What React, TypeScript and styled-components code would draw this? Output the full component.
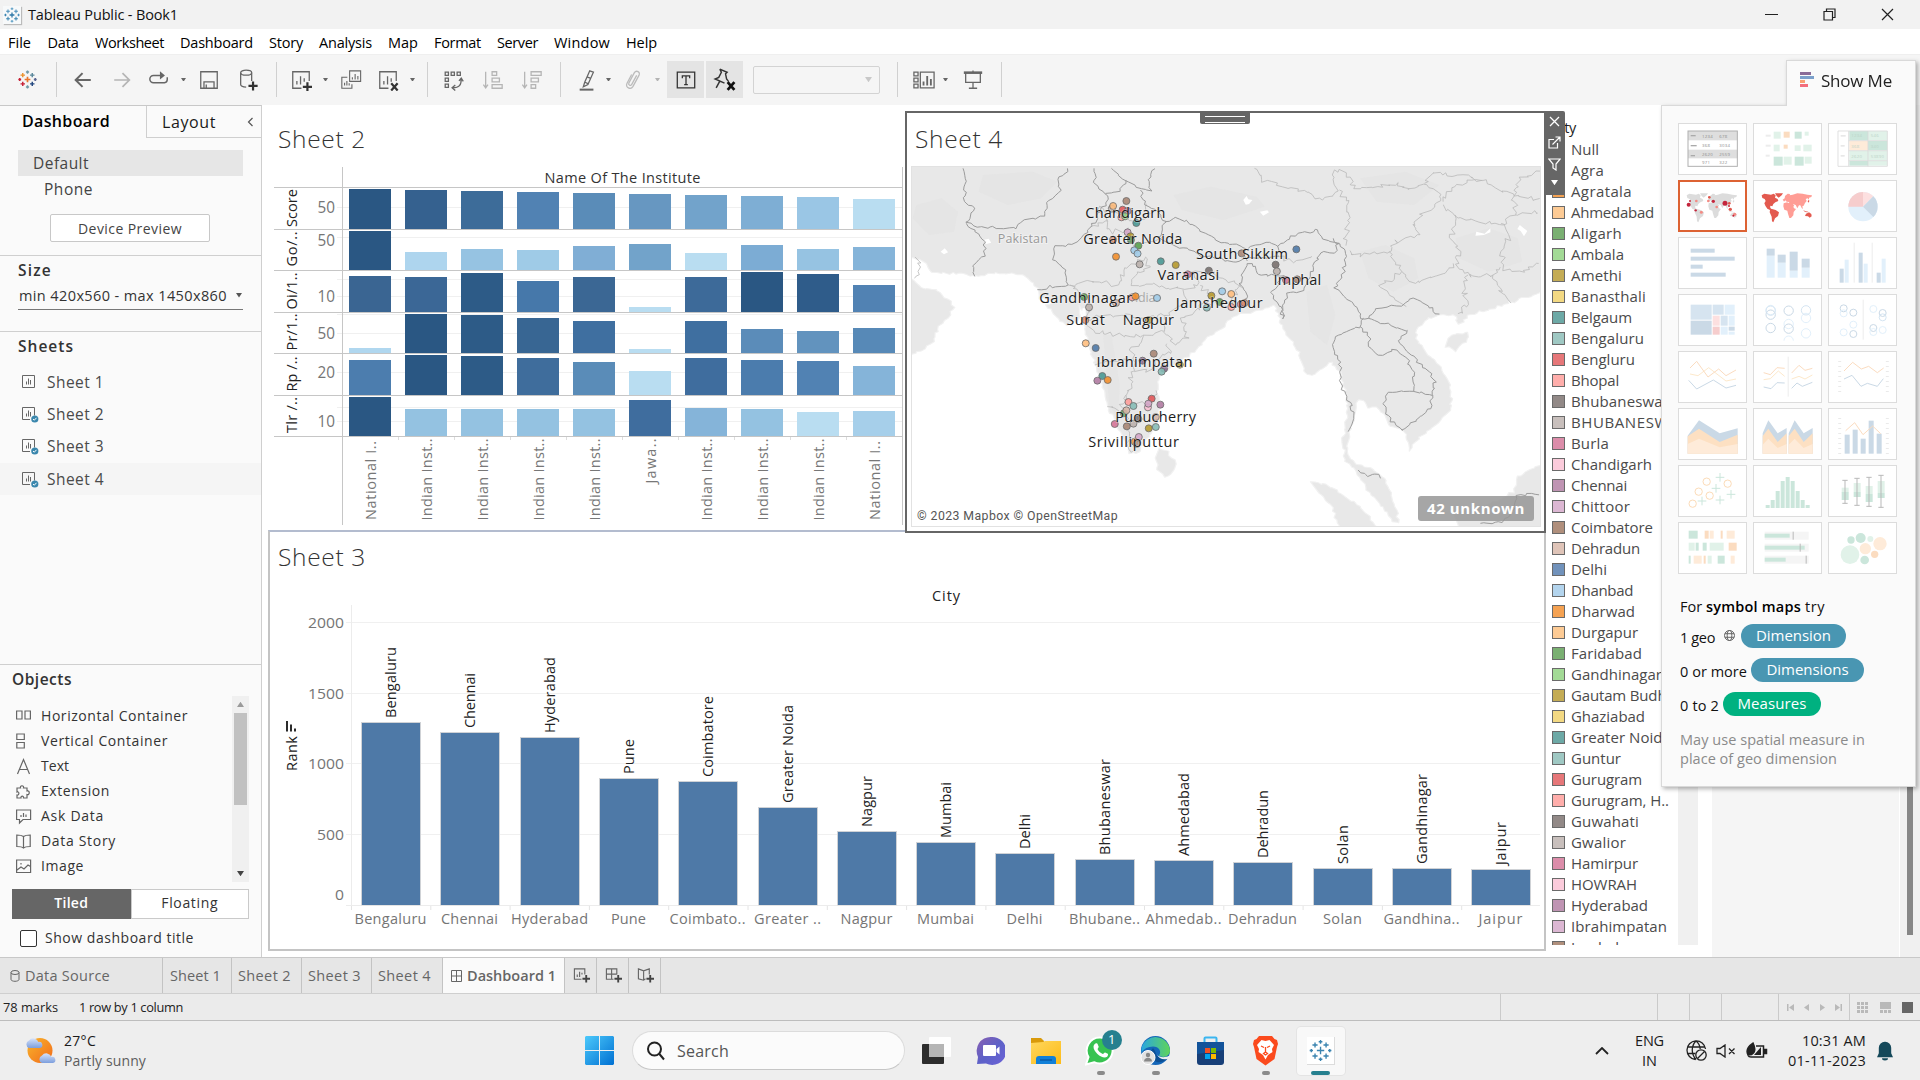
import React, { useLayoutEffect, useRef, useState } from "react";
import styled, { createGlobalStyle, css } from "styled-components";

const FONT = "'Open Sans', 'Noto Sans', sans-serif";

const Global = createGlobalStyle`
  * { box-sizing: border-box; }
  body { margin: 0; background: #fff; overflow: hidden; }
  svg { display: block; flex: none; }
  text { font-family: ${FONT}; }
`;

/* ---------- text that keeps a fixed advance width ---------- */

const FitSpan = styled.span`
  white-space: pre;
  display: inline-block;
`;

function Fit({ w, children }: { w: number; children: string }) {
  const ref = useRef<HTMLSpanElement>(null);
  const [ls, setLs] = useState(0);
  useLayoutEffect(() => {
    const el = ref.current;
    if (!el) return;
    setLs((w - el.getBoundingClientRect().width) / children.length);
  }, [w, children]);
  return (
    <FitSpan ref={ref} style={{ letterSpacing: ls }}>
      {children}
    </FitSpan>
  );
}

/* ---------- window frame ---------- */

const Window = styled.div`
  width: 1920px;
  height: 1080px;
  display: flex;
  flex-direction: column;
  font-family: ${FONT};
  font-size: 15px;
  color: #333;
  position: relative;
  overflow: hidden;
`;

const TitleBar = styled.header`
  height: 29px;
  background: #f2f2f2;
  display: flex;
  align-items: center;
  padding-left: 3px;
  color: #111;
  font-size: 14.5px;
`;

const AppBadge = styled.div`
  width: 18px;
  height: 18px;
  background: #f7f9fa;
  box-shadow: 1px 1px 1px #bbb;
  margin-right: 7px;
  display: grid;
  place-items: center;
`;

const Controls = styled.div`
  margin-left: auto;
  display: flex;
  align-items: center;
  gap: 45px;
  padding-right: 26px;
`;

const MenuBar = styled.nav`
  height: 25px;
  background: #fff;
  display: flex;
  align-items: center;
  padding-left: 8px;
  font-size: 14.5px;
  color: #000;
`;

const MenuItem = styled.div<{ $w: number }>`
  width: ${(p) => p.$w}px;
  line-height: 20px;
  padding-top: 2px;
`;

const Toolbar = styled.div`
  height: 51px;
  background: #f5f5f5;
  border-top: 1px solid #efefef;
  display: flex;
  align-items: center;
  padding: 0 0 1px 15px;
`;

const Sep = styled.i<{ $ml: number }>`
  width: 1px;
  height: 35px;
  background: #d0d0d0;
  margin-left: ${(p) => p.$ml}px;
`;

const Tool = styled.div<{ $ml: number; $w?: number; $on?: boolean; $dim?: boolean }>`
  width: ${(p) => p.$w ?? 24}px;
  height: 37px;
  margin-left: ${(p) => p.$ml}px;
  display: grid;
  place-items: center;
  background: ${(p) => (p.$on ? "#e4e4e4" : "transparent")};
  opacity: ${(p) => (p.$dim ? 0.45 : 1)};
`;

const Combo = styled.div`
  width: 127px;
  height: 28px;
  margin-left: 10px;
  border: 1px solid #d3d3d3;
  border-radius: 2px;
  display: flex;
  align-items: center;
  justify-content: flex-end;
  padding-right: 7px;
`;

const Main = styled.main`
  height: 852px;
  display: flex;
`;

/* ---------- icons ---------- */

const Caret = ({ s = 5, c = "#666" }: { s?: number; c?: string }) => (
  <svg width={s} height={s * 0.75} viewBox="0 0 8 6">
    <path d="M0 0h8L4 6z" fill={c} />
  </svg>
);

const plus = (x: number, y: number, r: number) => `M${x - r} ${y}h${2 * r}M${x} ${y - r}v${2 * r}`;

function TableauMark({ size, colors, sw = 1.3 }: { size: number; colors: string[]; sw?: number }) {
  const c = (i: number) => colors[i % colors.length];
  return (
    <svg width={size} height={size} viewBox="0 0 24 24" fill="none" strokeWidth={sw}>
      <path d={plus(12, 12, 3.6)} stroke={c(0)} strokeWidth={sw * 1.2} />
      <path d={plus(6, 6.5, 2.8)} stroke={c(1)} />
      <path d={plus(18, 6.5, 2.8)} stroke={c(2)} />
      <path d={plus(6, 17.5, 2.8)} stroke={c(3)} />
      <path d={plus(18, 17.5, 2.8)} stroke={c(4)} />
      <path d={plus(12, 2.6, 2)} stroke={c(5)} />
      <path d={plus(12, 21.4, 2)} stroke={c(5)} />
      <path d={plus(2.2, 12, 1.8)} stroke={c(3)} />
      <path d={plus(21.8, 12, 1.8)} stroke={c(6)} />
    </svg>
  );
}

const BLUES = ["#2f78a8", "#4b8fba", "#4b8fba", "#3a84b0", "#3a84b0", "#5a9cc4", "#4b8fba"];
const MULTI = ["#e8762d", "#eb912c", "#59879b", "#c72035", "#1f457e", "#7199a6", "#5b6591"];

const Ico = ({ children, s = 22, c = "#666", w = 1.4 }: any) => (
  <svg width={s} height={s} viewBox="0 0 24 24" fill="none" stroke={c} strokeWidth={w}>
    {children}
  </svg>
);

const Icons = {
  back: <Ico w={2.2}><path d="M20.500 12H4M11.500 4.500 4 12l7.500 7.500" /></Ico>,
  fwd: <Ico w={1.9} c="#b5b5b5"><path d="M3.500 12H20M12.500 4.500 20 12l-7.500 7.500" /></Ico>,
  redo: <Ico w={1.6}><path d="M14 7H6a4 4 0 0 0 0 8h12a3.500 3.500 0 0 0 3-3.500V9" /><path d="M13 2.500l5.500 4.500-5.500 4.500z" fill="#666" stroke="none" /></Ico>,
  save: <Ico><path d="M3 3h18v18H3zM6.500 21v-7h11v7M9 21v-4" /></Ico>,
  db: <Ico><ellipse cx="10" cy="4" rx="6" ry="2.700" /><path d="M4 4v13c0 1.500 2.500 2.700 6 2.700M16 4v9" /><path d="M12.500 18.500h10M17.500 13.500v10" stroke="#333" strokeWidth="2.400" /></Ico>,
  sheet: <Ico><path d="M12.500 21H3V3h18v10M7.500 17v-4M11.500 17V8M15.500 14v-4" /><path d="M14 19.500h10M19 14.500v10" stroke="#333" strokeWidth="2.400" /></Ico>,
  dup: <Ico w={1.200}><path d="M10.500 2h12v11.500h-12zM13.500 11.500V9M16.500 11.500V5.500M19.500 11.500V7.500M8 9H2v12h11v-4.500M5 18v-3M7.500 18v-5M10 18v-2.500" /></Ico>,
  clear: <Ico><path d="M12.500 21H3V3h18v10M7.500 17v-4M11.500 17V8M15.500 14v-4" /><path d="M15.500 15.500l7 8M22.500 15.500l-7 8" stroke="#333" strokeWidth="2.400" /></Ico>,
  swap: <Ico><path d="M3.500 3.500h3.500v3.500h-3.500zM10 3.500h3.500v3.500H10zM16.500 3.500H20v3.500h-3.500zM3.500 10h3.500v3.500h-3.500zM3.500 16.500h3.500V20h-3.500zM21 10.500c0 7-2 10-9.500 10M18.500 13l2.500-3 2.200 3.500M14.500 17.500l-3.500 3 3.500 3" /></Ico>,
  asc: <Ico c="#b5b5b5"><path d="M4 3v17M1.500 17 4 20.500 6.500 17M11 3h5v4h-5zM11 10h8v4h-8zM11 17h11v4H11z" /></Ico>,
  desc: <Ico c="#b5b5b5"><path d="M4 3v17M1.500 17 4 20.500 6.500 17M11 3h11v4H11zM11 10h8v4h-8zM11 17h5v4h-5z" /></Ico>,
  pen: <Ico><path d="M4 22.500h15" strokeWidth="2.200" /><path d="M15 2l4 1.500-6 13.500-5 2.500 1.500-5zM9.800 14.500l3.200 1.500M12 8.500l3.500 1.500" /></Ico>,
  clip: <Ico c="#777"><path d="M16 7l-5.500 10c-1 2-4 .5-3-1.700l6-11.300c2-3 7-1 5 3l-6.500 12c-2.300 4-9 1.500-6.500-3.500l5-9.500" /></Ico>,
  text: <Ico c="#333"><path d="M2.500 3.500h19v17h-19zM8 10V7.500h8V10M12 7.500v9.500M10 17h4" /></Ico>,
  pin: <Ico c="#333" s={25}><path d="M7.500 2l7 3-1.500 1.500 1 5 2 2.500M7.500 2l1.500 3-2.500 5-3.500 1.500 9 4M7.500 13.500 4 20" /><path d="M15 14.500l6.500 7.500M21.500 14.500 15 22" stroke="#111" strokeWidth="2.600" /></Ico>,
  cards: <Ico><path d="M1 3.500h4.500v4H1zM1 10h4.500v4H1zM1 16.500h4.500v4H1zM8 3.500h15v17H8z" /><path d="M11.500 18v-4.500M15.500 18V7.500M19.500 18v-7" strokeWidth="2" /></Ico>,
  present: <Ico><path d="M2 4h20" strokeWidth="2.800" /><path d="M4 4v10.500h16V4M12 14.500v6.500M7.500 21h9M12 4V1.500" /></Ico>,
};

/* ---------- side panel ---------- */

const Side = styled.aside`
  width: 262px;
  background: #fafafa;
  border-right: 1px solid #cfcfcf;
  border-top: 1px solid #c8c8c8;
  display: flex;
  flex-direction: column;
`;

const SideTabs = styled.div`
  display: flex;
  height: 32px;
  font-size: 16px;
`;

const SideTab = styled.div<{ $active?: boolean }>`
  line-height: 31px;
  color: #1a1a1a;
  ${(p) =>
    p.$active
      ? css`
          width: 146px;
          padding-left: 22px;
          font-weight: 600;
          color: #000;
        `
      : css`
          flex: 1;
          padding: 1px 7px 0 15px;
          line-height: 33px;
          border-left: 1px solid #cfcfcf;
          border-bottom: 1px solid #cfcfcf;
          display: flex;
          justify-content: space-between;
          align-items: center;
        `}
`;

const Devices = styled.div`
  padding: 12px 18px 0;
  height: 117px;
  color: #444;
  font-size: 15.5px;
`;

const Device = styled.div<{ $sel?: boolean }>`
  height: 26px;
  line-height: 26px;
  background: ${(p) => (p.$sel ? "#e6e6e6" : "transparent")};
  padding-left: ${(p) => (p.$sel ? 15 : 26)}px;
`;

const PreviewButton = styled.button`
  display: block;
  width: 160px;
  height: 28px;
  margin: 12px 0 0 32px;
  padding: 0;
  border: 1px solid #c8c8c8;
  border-radius: 2px;
  background: #fff;
  font: 14px ${FONT};
  color: #444;
`;

const Section = styled.section<{ $h: number; $px: number }>`
  height: ${(p) => p.$h}px;
  border-top: 1px solid #cfcfcf;
  padding: 3px ${(p) => p.$px}px 0;
`;

const Heading = styled.h2<{ $mb?: number }>`
  margin: 0 0 ${(p) => p.$mb ?? 0}px;
  font-size: 15.5px;
  line-height: 23px;
  font-weight: 600;
  color: #333;
`;

const SizePicker = styled.div`
  margin-top: 2px;
  height: 26px;
  border-bottom: 1px solid #777;
  display: flex;
  align-items: center;
  justify-content: space-between;
  padding: 0 1px 2px;
  font-size: 14.5px;
`;

const SheetItem = styled.div<{ $on?: boolean }>`
  height: 32.2px;
  margin: 0 -18px;
  padding-left: 22px;
  display: flex;
  align-items: center;
  gap: 8px;
  background: ${(p) => (p.$on ? "#f5f5f5" : "transparent")};
  color: #4a4a4a;
  font-size: 15.5px;
`;

const ObjectList = styled.div`
  display: flex;
  justify-content: space-between;
  height: 186px;
  margin-top: 5px;
`;

const ObjectItems = styled.div`
  padding: 7px 0 0 4px;
`;

const ObjectItem = styled.div`
  height: 25.05px;
  display: flex;
  align-items: center;
  gap: 9px;
  font-size: 14px;
  color: #333;
`;

const Scroll = styled.div`
  width: 17px;
  background: #f0f0f0;
  display: flex;
  flex-direction: column;
  align-items: center;
`;

const ScrollArrow = styled.div<{ $up?: boolean }>`
  height: 17px;
  display: grid;
  place-items: center;
  transform: ${(p) => (p.$up ? "rotate(180deg)" : "none")};
`;

const ScrollThumb = styled.div`
  width: 13px;
  height: 92px;
  background: #c1c1c1;
  margin-bottom: auto;
`;

const Segmented = styled.div`
  display: flex;
  margin-top: 7px;
  height: 30px;
`;

const Segment = styled.div<{ $on?: boolean }>`
  flex: 1;
  text-align: center;
  line-height: 26px;
  font-size: 14px;
  font-weight: ${(p) => (p.$on ? 600 : 400)};
  color: ${(p) => (p.$on ? "#fff" : "#333")};
  background: ${(p) => (p.$on ? "#666" : "#fff")};
  border: 1px solid ${(p) => (p.$on ? "#666" : "#cacaca")};
`;

const CheckRow = styled.div`
  display: flex;
  align-items: center;
  gap: 8px;
  margin: 9px 0 0 8px;
  font-size: 14px;
  line-height: 20px;
`;

const CheckBox = styled.i`
  width: 17px;
  height: 17px;
  border: 1px solid #333;
  border-radius: 2px;
  background: #fff;
`;

const SheetIcon = ({ used }: { used?: boolean }) => (
  <svg width="17" height="18" viewBox="0 0 17 18" fill="none" stroke="#666" strokeWidth="1">
    <path d={used ? "M8 14.500H.500v-12h12v8" : "M.500 2.500h12v12H.500z"} />
    <path d="M4.500 11.500V8.500M6.500 11.500V5.500M8.500 11.500V7" />
    {used && <circle cx="12.800" cy="14" r="3.600" fill="#3a87ad" stroke="none" />}
    {used && <path d="M11 14l1.300 1.200 2.200-2.400" stroke="#fff" />}
  </svg>
);

const objIcon = (d: string) => (
  <svg width="16" height="18" viewBox="0 0 16 18" fill="none" stroke="#666" strokeWidth="1.200">
    <path d={d} />
  </svg>
);

const OBJECTS: [string, number, string][] = [
  ["Horizontal Container", 147, "M.6 4h5.400v8H.600zM9 4h5.400v8H9z"],
  ["Vertical Container", 127, "M.800 2h7.500v5.500H.800zM.800 10.500h7.500V16H.800z"],
  ["Text", 28, "M1.500 17 7.500 2.500l6 14.500M3.500 12.500h8"],
  ["Extension", 69, "M1 6h3.500c-1-3 4-3 3 0H11v3c3-1 3 4.500 0 3.500V16H7.500c.5-2.500-3-2.500-2.500 0H1v-3c2.500.5 2.500-4 0-3z"],
  ["Ask Data", 63, "M.600 3h14v9.500H7L3.500 16v-3.500H.600zM5 10V8M7.500 10V6M10 10V7.500"],
  ["Data Story", 75, "M7.500 4.500C5.500 3 3 3 .800 3v11.500c2 0 5 0 6.700 1.500 1.700-1.500 4.500-1.500 6.700-1.500V3c-2.200 0-4.700 0-6.700 1.500zv11"],
  ["Image", 43, "M.600 3h14v12.500H.600zM1 13l4-3 3 2 4-4 2.500 1.500M5 6v1.500"],
];

function SidePanel() {
  return (
    <Side>
      <SideTabs>
        <SideTab $active><Fit w={88}>Dashboard</Fit></SideTab>
        <SideTab>
          <Fit w={54}>Layout</Fit>
          <svg width="7" height="10" viewBox="0 0 7 10" fill="none" stroke="#555" strokeWidth="1.200"><path d="M5.500 1 1.500 5l4 4" /></svg>
        </SideTab>
      </SideTabs>
      <Devices>
        <Device $sel><Fit w={56}>Default</Fit></Device>
        <Device><Fit w={49}>Phone</Fit></Device>
        <PreviewButton><Fit w={104}>Device Preview</Fit></PreviewButton>
      </Devices>
      <Section $h={76} $px={18}>
        <Heading><Fit w={34}>Size</Fit></Heading>
        <SizePicker>
          <Fit w={208}>min 420x560 - max 1450x860</Fit>
          <Caret s={6} c="#555" />
        </SizePicker>
      </Section>
      <Section $h={333} $px={18}>
        <Heading $mb={8}><Fit w={56}>Sheets</Fit></Heading>
        {[1, 2, 3, 4].map((n) => (
          <SheetItem key={n} $on={n === 4}>
            <SheetIcon used={n > 1} />
            <Fit w={57}>{"Sheet " + n}</Fit>
          </SheetItem>
        ))}
      </Section>
      <Section $h={293} $px={12}>
        <Heading><Fit w={60}>Objects</Fit></Heading>
        <ObjectList>
          <ObjectItems>
            {OBJECTS.map(([label, w, d]) => (
              <ObjectItem key={label}>
                {objIcon(d)}
                <Fit w={w}>{label}</Fit>
              </ObjectItem>
            ))}
          </ObjectItems>
          <Scroll>
            <ScrollArrow $up><Caret s={7} c="#9a9a9a" /></ScrollArrow>
            <ScrollThumb />
            <ScrollArrow><Caret s={7} c="#444" /></ScrollArrow>
          </Scroll>
        </ObjectList>
        <Segmented>
          <Segment $on><Fit w={34}>Tiled</Fit></Segment>
          <Segment><Fit w={57}>Floating</Fit></Segment>
        </Segmented>
        <CheckRow>
          <CheckBox />
          <Fit w={149}>Show dashboard title</Fit>
        </CheckRow>
      </Section>
    </Side>
  );
}

/* ---------- sheet 2: small multiples ---------- */

const INSTITUTES = ["National I..", "Indian Inst..", "Indian Inst..", "Indian Inst..", "Indian Inst..", "Jawa..", "Indian Inst..", "Indian Inst..", "Indian Inst..", "National I.."];

interface Measure {
  name: string;
  len: number;
  bottom: number;
  tick: string;
  tickY: number;
  grid: number[];
  h: number[];
  c: string[];
}

const MEASURES: Measure[] = [
  { name: "Score", len: 38, bottom: 229, tick: "50", tickY: 207.5, grid: [207.5], h: [40, 39, 38, 37, 36, 35, 34, 33, 32, 30], c: ["#2a5783", "#35618f", "#3d6c99", "#5182b3", "#5a8cb8", "#6797c1", "#72a3cb", "#7eaed4", "#9ac6e5", "#b9ddf1"] },
  { name: "Go/..", len: 35, bottom: 270, tick: "50", tickY: 240.5, grid: [237.5], h: [39, 18, 21, 20, 24, 26, 17, 25, 21, 23], c: ["#2a5783", "#aed5ee", "#96c3e2", "#9fcbe7", "#80aed5", "#72a3ca", "#b9ddf1", "#7cacd4", "#96c3e2", "#85b4d9"] },
  { name: "Oi/1..", len: 37, bottom: 312, tick: "10", tickY: 296.5, grid: [279.5, 296.5], h: [36, 35, 39, 31, 35, 5, 35, 40, 38, 27], c: ["#3a6592", "#3b6796", "#2d5b87", "#4678aa", "#3b6794", "#b9ddf1", "#3d6a99", "#2a5783", "#2f5c8a", "#5182b3"] },
  { name: "Pr/1..", len: 37, bottom: 353, tick: "50", tickY: 333.5, grid: [314.5, 333.5], h: [5, 39, 38, 35, 32, 4, 32, 24, 22, 25], c: ["#b0d7ef", "#2a5783", "#2d5b87", "#386693", "#3f6fa0", "#b9ddf1", "#3f6fa0", "#5b8cb9", "#6293be", "#5789b7"] },
  { name: "Rp /..", len: 35, bottom: 395, tick: "20", tickY: 372.5, grid: [372.5], h: [35, 40, 39, 37, 33, 24, 37, 35, 34, 29], c: ["#4c7dae", "#2a5783", "#2d5b87", "#3f6d9c", "#5a8cb8", "#b9ddf1", "#3f6d9e", "#4b7cad", "#5182b3", "#85b4d9"] },
  { name: "Tlr /..", len: 36, bottom: 436, tick: "10", tickY: 421.5, grid: [407.5, 421.5], h: [39, 27, 27, 27, 27, 36, 28, 27, 24, 25], c: ["#2a5783", "#94c2e1", "#94c2e1", "#94c2e1", "#94c2e1", "#3f6d9e", "#85b4d9", "#94c2e1", "#b9ddf1", "#a6cfea"] },
];

const SheetTitle = styled.h1<{ $h: number; $pl: number; $pt: number }>`
  margin: 0;
  height: ${(p) => p.$h}px;
  padding: ${(p) => p.$pt}px 0 0 ${(p) => p.$pl}px;
  font-size: 24.5px;
  line-height: 32px;
  font-weight: 300;
  color: #333;
`;

const Sheet2Card = styled.section`
  width: 637px;
  height: 425px;
`;

function Sheet2() {
  return (
    <Sheet2Card>
      <SheetTitle $h={62} $pl={10} $pt={18}><Fit w={88}>Sheet 2</Fit></SheetTitle>
      <svg width="637" height="363" viewBox="268 167 637 363">
        <text x="622.500" y="182.500" fontSize="14.500" textAnchor="middle" textLength="156" fill="#333">Name Of The Institute</text>
        {MEASURES.map((m) => (
          <g key={m.name}>
            {m.grid.map((y) => <path key={y} d={`M337 ${y}H902`} stroke="#f0f0f0" />)}
            <text x="335" y={m.tickY + 5.500} fontSize="15.500" textAnchor="end" textLength="17.500" lengthAdjust="spacingAndGlyphs" fill="#757575">{m.tick}</text>
            <text transform={`translate(297 ${m.bottom - 21}) rotate(-90)`} fontSize="14.500" textAnchor="middle" textLength={m.len} fill="#222">{m.name}</text>
            {m.h.map((h, i) => <rect key={i} x={349 + i * 56} y={m.bottom - h} width="42" height={h} fill={m.c[i]} shapeRendering="crispEdges" />)}
            <path d={`M274 ${m.bottom + 0.500}H902`} stroke="#c6c6c6" />
          </g>
        ))}
        <path d="M274 187.500H902M342.500 167V525M902.500 167V525" stroke="#c6c6c6" />
        {INSTITUTES.map((t, i) => (
          <g key={i}>
            {i > 0 && <path d={`M${342.500 + i * 56} 437v3`} stroke="#ddd" />}
            <text transform={`translate(${375.500 + i * 56} ${t.startsWith("N") ? 441 : 438.500}) rotate(-90)`} fontSize="14.500" textAnchor="end" textLength={t.startsWith("Ind") ? 82 : t.startsWith("J") ? 45 : 79} fill="#777">{t}</text>
          </g>
        ))}
      </svg>
    </Sheet2Card>
  );
}

/* ---------- sheet 4: symbol map ---------- */

const Sheet4Card = styled.section`
  position: relative;
  z-index: 1;
  width: 641px;
  height: 422px;
  margin-top: 6px;
  border: 2px solid #666;
  background: #fff;
`;

const MapFrame = styled.div`
  position: relative;
  margin-left: 4px;
  width: 630px;
  height: 361px;
  border: 1px solid #e2e2e2;
`;

const Attribution = styled.div`
  position: absolute;
  left: 2px;
  bottom: 1px;
  padding: 0 4px 0 3px;
  height: 17px;
  font: 12.3px/17px Roboto, sans-serif;
  color: #555;
  background: rgba(255, 255, 255, 0.7);
`;

const Unknown = styled.div`
  position: absolute;
  right: 6px;
  bottom: 5px;
  width: 116px;
  height: 25px;
  border-radius: 3px;
  background: rgba(150, 150, 150, 0.85);
  color: #fff;
  font-weight: 700;
  font-size: 15px;
  line-height: 24px;
  text-align: center;
`;

const Grip = styled.div`
  position: absolute;
  left: 293px;
  top: -1px;
  width: 50px;
  height: 12px;
  background: #666;
  border-radius: 0 0 2px 2px;
  padding: 4px 5px;
  &::before {
    content: "";
    display: block;
    height: 5px;
    border-top: 1px solid #fff;
    border-bottom: 1px solid #fff;
  }
`;

const CardTools = styled.div`
  position: absolute;
  left: 637px;
  top: -2px;
  width: 21px;
  height: 84px;
  background: #666;
  border-radius: 0 2px 0 0;
  display: flex;
  flex-direction: column;
  align-items: center;
  padding: 5px 1px 0 0;
  gap: 9px;
`;

type P = [number, number];

/* Subdivides a polyline with a deterministic jitter so borders look surveyed. */
function rough(points: P[], amp: number, closed = false): string {
  let seed = 7 + points.length * 31 + points[0][0];
  const rnd = () => {
    seed = (seed * 9301 + 49297) % 233280;
    return seed / 233280 - 0.5;
  };
  const out: P[] = [points[0]];
  for (let i = 1; i < points.length; i++) {
    const [ax, ay] = points[i - 1];
    const [bx, by] = points[i];
    const n = Math.max(1, Math.round(Math.hypot(bx - ax, by - ay) / 9));
    for (let k = 1; k <= n; k++) {
      const t = k / n;
      out.push([ax + (bx - ax) * t + rnd() * amp, ay + (by - ay) * t + rnd() * amp]);
    }
  }
  return "M" + out.map(([x, y]) => `${x.toFixed(1)} ${y.toFixed(1)}`).join("L") + (closed ? "Z" : "");
}

const pts = (s: string): P[] => s.split(" ").map((q) => q.split(",").map(Number) as P);

const LAND = [
  "20,180 1550,180 1550,555 1520,572 1480,590 1440,605 1400,620 1370,632 1357,655 1345,655 1340,632 1300,632 1270,645 1250,665 1245,700 1265,740 1300,780 1325,830 1332,880 1325,920 1290,960 1260,990 1228,1035 1224,1005 1215,978 1185,965 1165,930 1150,905 1125,910 1115,885 1100,890 1098,940 1085,980 1080,1020 1085,1060 1105,1080 1140,1090 1170,1120 1185,1170 1205,1250 1190,1250 1160,1200 1130,1165 1115,1130 1100,1100 1075,1070 1068,1010 1075,960 1080,920 1075,860 1060,800 1040,770 1020,790 1000,810 975,805 968,760 950,720 930,680 915,640 905,600 880,610 850,620 800,635 775,670 740,695 710,740 680,765 650,790 625,815 620,850 625,900 620,960 605,990 585,1020 570,1048 555,1045 540,1000 520,955 500,900 490,850 478,800 462,750 450,700 445,655 442,620 435,605 430,650 400,660 370,630 352,600 372,590 338,578 332,548 300,510 250,503 180,512 80,500 50,465 20,455",
  "20,515 50,548 85,552 110,575 130,605 115,640 90,670 80,710 50,735 20,752",
  "625,1030 645,1040 665,1075 655,1105 635,1115 620,1095 618,1060",
  "1322,700 1345,682 1370,685 1360,718 1338,737 1318,725",
  "990,1130 1030,1140 1080,1180 1120,1215 1150,1270 1060,1270 1040,1200 1010,1165",
  "1335,1225 1400,1205 1440,1185 1480,1160 1490,1115 1520,1095 1550,1075 1550,1270 1350,1270",
];

const COUNTRY_LINES = [
  "152,190 158,230 155,290 180,310 160,355 200,368 280,368 300,345 345,335 355,290 385,260 378,225 408,190",
  "160,355 190,390 205,410 205,450 180,480 178,512",
  "468,190 470,235 500,270 495,300 485,320 470,350 460,365 425,415 375,425 370,460 395,490 405,540 360,545 335,555",
  "510,190 545,225 580,255 605,260 600,225 615,190",
  "545,225 530,255 500,265",
  "580,255 590,300 625,320 640,350 630,380 628,400 680,430 740,455 800,468 830,465",
  "640,350 665,335 700,355 740,390 780,415 830,425 835,465",
  "840,430 880,412 910,425 915,455 840,460",
  "910,425 960,385 1010,375 1020,405 1060,410 1050,440 1015,440 1000,480 985,520 970,560 940,560 925,590 925,640 915,600 895,565 910,540 925,510 900,512 862,508 860,485 838,475 825,500 820,540 835,570 832,612",
  "1045,400 1075,440 1070,500 1050,550 1075,580 1100,600 1115,640 1130,640 1150,610 1210,600 1240,580 1270,600 1300,630",
  "1118,640 1110,665 1055,690 1045,730 1060,770 1065,850 1085,890 1095,940 1078,980",
  "1110,665 1130,690 1135,730 1160,755 1190,730 1225,765 1240,810 1235,855 1180,865 1165,890 1180,940 1215,978",
  "1130,640 1170,655 1225,680 1200,710 1250,770 1290,820 1285,870 1240,858",
  "1285,870 1280,910 1255,935 1215,975",
  "1105,1095 1130,1115 1145,1105 1158,1120",
  "1400,1255 1450,1250 1480,1215 1490,1170 1540,1165",
];

const STATE_LINES = [
  "855,190 870,225 930,245 980,260 1015,290 1060,255 1045,215 1060,195 1085,215 1100,255 1150,250 1200,235 1225,255",
  "1060,255 1085,300 1080,350 1075,420",
  "1225,255 1265,235 1300,255 1310,290 1260,320 1240,355 1250,395 1200,410 1180,440 1140,440 1100,455 1080,440",
  "1310,290 1340,240 1400,225 1440,250 1490,275 1543,285",
  "1310,300 1340,330 1400,355 1450,355 1480,330 1543,320",
  "1450,355 1470,400 1450,440 1455,490 1500,500 1543,470",
  "1340,330 1330,400 1350,450 1340,480 1370,510 1430,510 1455,490",
  "1180,440 1210,500 1240,530 1290,520 1340,480",
  "1210,500 1160,540 1180,570 1215,600",
  "1370,510 1360,560 1370,600 1345,632",
  "1430,510 1450,560 1470,590",
  "1485,330 1480,260 1500,215 1543,200",
  "1265,235 1280,205 1350,210 1400,225",
  "460,365 500,350 510,380 550,375 560,420 600,410 628,400",
  "405,540 470,525 520,540 545,490 590,460 600,490 570,500 560,540 620,540 690,560 720,540 700,500 760,510 820,540",
  "500,350 480,310 540,330 575,360 600,330 590,300",
  "410,540 440,570 460,600 450,640 520,630 600,640 640,630 690,590 690,560",
  "640,630 635,680 590,690 560,740 565,800 555,830 550,880 570,900 610,880 625,860",
  "450,660 470,680 520,690 590,690",
  "635,680 660,720 690,700 680,640 720,610 760,590 740,560 720,540",
  "470,780 520,770 560,760",
  "565,800 600,800 620,760 650,740 640,710",
  "545,870 530,900 545,930 550,980 555,1045",
  "500,905 530,920",
  "760,590 800,600 820,540",
  "915,455 960,470 1000,455",
  "35,520 45,490 42,460",
];

const DOTS: [number, number, string][] = [
  [546, 288, "#a98674"], [511, 311, "#c3b8b6"], [514, 303, "#fdbb7c"], [537, 314, "#e15759"], [549, 318, "#b07aa1"], [534, 337, "#ff9d9a"], [543, 334, "#8cd17d"], [570, 354, "#499894"],
  [549, 382, "#d4a6c8"], [556, 394, "#b6992d"], [514, 404, "#d98a6a"], [557, 405, "#4e8a4a"], [575, 422, "#59a14f"], [565, 436, "#a0cbe8"], [573, 446, "#a0cbe8"], [521, 455, "#f28e2b"], [578, 478, "#bab0ac"], [629, 469, "#499894"], [665, 480, "#b6992d"], [694, 508, "#d37295"], [745, 497, "#79706e"],
  [824, 445, "#a98674"], [956, 433, "#4e79a7"], [906, 479, "#79706e"], [909, 499, "#bab0ac"], [931, 525, "#d37295"], [958, 523, "#a98674"],
  [444, 576, "#59a14f"], [456, 607, "#bab0ac"], [521, 594, "#d7b5a6"], [560, 577, "#ff9d9a"], [568, 574, "#f28e2b"], [620, 579, "#a0cbe8"], [751, 572, "#b6992d"], [777, 559, "#a0cbe8"], [799, 567, "#ffbe7d"], [771, 591, "#59a14f"], [740, 608, "#86bcb6"], [799, 606, "#ff9d9a"], [822, 598, "#d37295"], [831, 594, "#d98a6a"],
  [447, 645, "#d98a6a"], [600, 645, "#b6992d"], [448, 715, "#ffbe7d"], [472, 729, "#4e79a7"], [612, 746, "#a98674"], [585, 767, "#8a6a90"], [675, 779, "#b6992d"], [637, 791, "#8a6a90"], [631, 800, "#86bcb6"], [488, 813, "#499894"], [476, 827, "#b07aa1"], [501, 825, "#f28e2b"],
  [607, 881, "#e15759"], [598, 907, "#fabfd2"], [599, 896, "#d4a6c8"], [628, 899, "#b07aa1"], [551, 891, "#ff9d9a"], [563, 903, "#86bcb6"], [540, 925, "#59a14f"], [546, 916, "#d7b5a6"], [518, 957, "#d37295"], [575, 942, "#79706e"], [617, 936, "#d7b5a6"], [563, 956, "#bab0ac"], [547, 964, "#a98674"], [600, 970, "#b6992d"], [617, 966, "#86bcb6"], [576, 996, "#d4a6c8"], [566, 1010, "#f28e2b"], [571, 1017, "#b09a90"],
];

const CITY_LABELS: [string, number, number, number][] = [
  ["Chandigarh", 447, 640, 324], ["Greater Noida", 442, 681, 402], ["South Sikkim", 714, 936, 447], ["Varanasi", 621, 770, 510], ["Imphal", 901, 1016, 525], ["Gandhinagar", 336, 560, 579], ["Jamshedpur", 665, 875, 594], ["Surat", 401, 494, 645], ["Nagpur", 537, 661, 645], ["Ibrahimpatan", 474, 705, 771], ["Puducherry", 519, 714, 936], ["Srivilliputtur", 454, 673, 1011],
];

const mx = (x: number) => x / 2.412 - 12;
const my = (y: number) => y / 3 - 62;

function SymbolMap() {
  return (
    <svg width="628" height="359" viewBox="0 0 628 359">
      <g transform="translate(-12 -62) scale(0.41459 0.33333)" strokeLinejoin="round">
        {LAND.map((l) => <path key={l} d={rough(pts(l), 8, true)} fill="#e8e8e8" stroke="#f1f1f1" strokeWidth="3" />)}
        <g fill="#e3e3e3" opacity=".6">
          <path d="M200 210l120-10 60 30-40 50-80 20-70-40zM40 300l60-20 40 40-10 60-60 10-40-50zM1110 440l60-20 70 40 10 60-60 40-60-40zM1340 400l80-30 70 30 10 70-80 30-70-40zM660 270l90-25 110 30 20 30-100 40-100-30zM980 560l50-20 20 90-20 90-40-40zM490 690l20 0 20 150-5 100-20-40zM1110 220l110-20 80 40-60 60-90-10z" />
        </g>
        <g fill="#fff">
          <path d="M828 285l8-12 4 10 10 2-8 12-8 2zM868 320l18-4 4 6-14 10zM1390 380l20 6 14-16v12l-16 8-20 2zM1495 360l8 8 10 10-8 16-8-16-8-6zM98 440l10-10 8 12-10 6zM200 405l14-4 6 12-12 4zM440 610h8v45h-8z" />
        </g>
        {STATE_LINES.map((l) => <path key={l} d={rough(pts(l), 15)} fill="none" stroke="#b9b9b9" strokeWidth=".8" vectorEffect="non-scaling-stroke" />)}
        {COUNTRY_LINES.map((l) => <path key={l} d={rough(pts(l), 9)} fill="none" stroke="#9b9b9b" strokeWidth="1" vectorEffect="non-scaling-stroke" />)}
      </g>
      <text x={mx(236)} y={my(415)} fontSize="12.500" textLength="50" fill="#999" stroke="#f0f0f0" strokeWidth="2" paintOrder="stroke">Pakistan</text>
      <text x={mx(556)} y={my(592)} fontSize="12.500" textLength="25" fill="#aaa">ndia</text>
      {DOTS.map(([x, y, c], i) => <circle key={i} cx={mx(x)} cy={my(y)} r="3.500" fill={c} stroke="#6b6b6b" strokeWidth=".8" fillOpacity=".9" />)}
      {CITY_LABELS.map(([t, a, b, y]) => (
        <text key={t} x={mx(a)} y={my(y) + 5} fontSize="14.500" textLength={(b - a) / 2.412} fill="#1c1c1c" stroke="#fff" strokeOpacity=".35" strokeWidth="1.500" paintOrder="stroke">{t}</text>
      ))}
    </svg>
  );
}

function Sheet4() {
  return (
    <Sheet4Card>
      <SheetTitle $h={53} $pl={8} $pt={10}><Fit w={88}>Sheet 4</Fit></SheetTitle>
      <MapFrame>
        <SymbolMap />
        <Attribution><Fit w={201}>© 2023 Mapbox © OpenStreetMap</Fit></Attribution>
        <Unknown><Fit w={98}>42 unknown</Fit></Unknown>
      </MapFrame>
      <Grip />
      <CardTools>
        <svg width="11" height="11" viewBox="0 0 11 11" stroke="#fff" strokeWidth="1.300"><path d="M1 1l9 9M10 1l-9 9" /></svg>
        <svg width="13" height="13" viewBox="0 0 13 13" stroke="#fff" strokeWidth="1.200" fill="none"><path d="M6 3.500H1v8.500h8.500V7M4.500 8.500 11.500 1.500M7.500 1h4.500v4.500" /></svg>
        <svg width="13" height="13" viewBox="0 0 13 13" stroke="#fff" strokeWidth="1.200" fill="none"><path d="M.8 1h11.400L8 6v6L5 10V6z" /></svg>
        <Caret s={7} c="#fff" />
      </CardTools>
    </Sheet4Card>
  );
}

/* ---------- sheet 3: city bars ---------- */

const Sheet3Card = styled.section`
  width: 1278px;
  height: 421px;
  border: 2px solid #c4c4c4;
  border-top-color: #b3bccf;
`;

const CITIES: [string, number, number, string, number][] = [
  ["Bengaluru", 722, 71, "Bengaluru", 72],
  ["Chennai", 732, 55, "Chennai", 57],
  ["Hyderabad", 737, 76, "Hyderabad", 77],
  ["Pune", 778, 35, "Pune", 35],
  ["Coimbatore", 781, 81, "Coimbato..", 76],
  ["Greater Noida", 807, 98, "Greater ..", 67],
  ["Nagpur", 831, 51, "Nagpur", 52],
  ["Mumbai", 842, 56, "Mumbai", 57],
  ["Delhi", 853, 35, "Delhi", 36],
  ["Bhubaneswar", 859, 96, "Bhubane..", 71],
  ["Ahmedabad", 860, 83, "Ahmedab..", 76],
  ["Dehradun", 862, 68, "Dehradun", 69],
  ["Solan", 868, 39, "Solan", 39],
  ["Gandhinagar", 868, 90, "Gandhina..", 76],
  ["Jaipur", 869, 43, "Jaipur", 44],
];

const TICKS: [string, number, number][] = [["2000", 622.5, 36], ["1500", 693.5, 36], ["1000", 763.5, 36], ["500", 834.5, 27], ["0", 894, 9]];

function Sheet3() {
  return (
    <Sheet3Card>
      <SheetTitle $h={48} $pl={8} $pt={9}><Fit w={88}>Sheet 3</Fit></SheetTitle>
      <svg width="1274" height="369" viewBox="270 580 1274 369">
        <text x="932" y="600.500" fontSize="14.500" textLength="28" fill="#222">City</text>
        {TICKS.map(([t, y, w]) => (
          <g key={t}>
            {t !== "0" && <path d={`M346 ${y}H1540`} stroke="#f0f0f0" />}
            <text x="344" y={y + 5.500} fontSize="15" textAnchor="end" textLength={w} lengthAdjust="spacingAndGlyphs" fill="#757575">{t}</text>
          </g>
        ))}
        <path d="M351.500 605V909M346 905.500H1540" stroke="#ececec" />
        <text transform="translate(297 771) rotate(-90)" fontSize="14.500" textLength="35" fill="#222">Rank</text>
        <path d="M287 731.500V721M291 731.500v-7M295 731.500v-3" stroke="#222" strokeWidth="1.900" />
        {CITIES.map(([name, top, len, label, w], i) => {
          const x = Math.round(361 + i * 79.3);
          return (
            <g key={name}>
              <path d={`M${351.500 + i * 79.300} 906v4`} stroke="#e4e4e4" />
              <rect x={x + 0.500} y={top + 0.500} width="59" height={905 - top} fill="#4e79a7" stroke="#cfd2d6" />
              <path d={`M${x} 905.500h60`} stroke="#e4e4e4" />
              <text transform={`translate(${x + 34.500} ${top - 4}) rotate(-90)`} fontSize="14.500" textLength={len} fill="#222">{name}</text>
              <text x={x + 29.500} y="924" fontSize="14.500" textAnchor="middle" textLength={w} fill="#757575">{label}</text>
            </g>
          );
        })}
      </svg>
    </Sheet3Card>
  );
}

/* ---------- dashboard area ---------- */

const Canvas = styled.div`
  width: 1450px;
  padding-left: 6px;
  display: flex;
  background: #fff;
`;

const Sheets = styled.div`
  width: 1279px;
`;

const TopRow = styled.div`
  display: flex;
  height: 425px;
`;

const Legend = styled.div`
  width: 131px;
  height: 840px;
  padding: 13px 0 0 5px;
  overflow: hidden;
`;

const LegendTitle = styled.div`
  height: 21px;
  line-height: 20px;
  font-size: 14.5px;
  color: #222;
`;

const LegendRow = styled.div`
  height: 21px;
  display: flex;
  align-items: center;
  gap: 6px;
  white-space: pre;
  font-size: 15px;
  line-height: 21px;
  color: #4b4b4b;
`;

const Swatch = styled.i<{ $c: string }>`
  width: 13px;
  height: 13px;
  flex: none;
  border: 1px solid #6a6a6a;
  background: ${(p) => p.$c};
`;

const LegendScroll = styled.div`
  width: 20px;
  height: 840px;
  background: #f0f0f0;
`;

const Gutter = styled.div`
  width: 187px;
  background: #f5f5f5;
`;

const PageScroll = styled.div`
  width: 21px;
  background: #f0f0f0;
  border-left: 1px solid #fff;
  padding: 300px 0 0 7px;
`;

const PageThumb = styled.div`
  width: 6px;
  height: 530px;
  background: #868686;
`;

const TABLEAU20 = ["#7192bb", "#b3d4ed", "#f5a252", "#fdcb95", "#7ab072", "#a3da96", "#c4ac55", "#f3d983", "#6da9a6", "#9fc8c3", "#e67779", "#ffaeab", "#928987", "#c8bfbc", "#dc8daa", "#fbcbdb", "#bf94b3", "#dcb7d3", "#b08f7c", "#dfc4b8"];

const LEGEND: [string, number][] = [
  ["Null", 28], ["Agra", 33], ["Agratala", 61], ["Ahmedabad", 83], ["Aligarh", 51], ["Ambala", 53], ["Amethi", 51], ["Banasthali", 75], ["Belgaum", 61], ["Bengaluru", 73], ["Bengluru", 64], ["Bhopal", 48], ["Bhubaneswar", 98], ["BHUBANESW..", 107], ["Burla", 38], ["Chandigarh", 81], ["Chennai", 56], ["Chittoor", 59], ["Coimbatore", 82], ["Dehradun", 69], ["Delhi", 36], ["Dhanbad", 62], ["Dharwad", 64], ["Durgapur", 67], ["Faridabad", 71], ["Gandhinagar", 91], ["Gautam Budh..", 103], ["Ghaziabad", 74], ["Greater Noida", 100], ["Guntur", 50], ["Gurugram", 71], ["Gurugram, H..", 98], ["Guwahati", 68], ["Gwalior", 55], ["Hamirpur", 67], ["HOWRAH", 66], ["Hyderabad", 77], ["Ibrahimpatan", 96], ["Imphal", 48],
];

/* ---------- Show Me ---------- */

const ShowMe = styled.aside`
  position: absolute;
  left: 1661px;
  top: 60px;
  width: 255px;
  z-index: 3;
  filter: drop-shadow(2px 2px 2px rgba(0, 0, 0, 0.3));
`;

const ShowMeTab = styled.div`
  width: 130px;
  height: 46px;
  margin: 0 0 -1px auto;
  position: relative;
  background: #fafafa;
  border: 1px solid #d9d9d9;
  border-bottom: 0;
  display: flex;
  align-items: center;
  gap: 6px;
  padding: 0 0 7px 13px;
  font-size: 17px;
  color: #222;
`;

const ShowMeBody = styled.div`
  height: 682px;
  background: #fafafa;
  border: 1px solid #d9d9d9;
  padding: 17px 16px;
`;

const ThumbGrid = styled.div`
  display: grid;
  grid-template-columns: repeat(3, 69px);
  grid-auto-rows: 52px;
  gap: 5px 6px;
`;

const Thumb = styled.div<{ $on?: boolean }>`
  background: #fff;
  outline: ${(p) => (p.$on ? "2px solid #dd6233" : "1px solid #dcdcdc")};
  outline-offset: ${(p) => (p.$on ? -2 : -1)}px;
`;

const HintTitle = styled.div`
  height: 25px;
  margin-top: 20px;
  display: flex;
  align-items: center;
  padding-left: 2px;
  font-size: 14.5px;
  color: #111;
  b {
    font-weight: 600;
    color: #000;
  }
`;

const Hint = styled.div`
  height: 34px;
  display: flex;
  align-items: center;
  padding: 3px 0 0 2px;
  font-size: 14.5px;
  color: #111;
`;

const GlobeIcon = styled.svg`
  margin: -4px 2px 0 9px;
`;

const Pill = styled.span<{ $w: number; $green?: boolean }>`
  width: ${(p) => p.$w}px;
  height: 24px;
  border-radius: 12px;
  background: ${(p) => (p.$green ? "#00b180" : "#4996b2")};
  color: #fff;
  font-size: 15px;
  line-height: 23px;
  text-align: center;
  margin: -3px 0 0 4px;
`;

const Note = styled.p`
  margin: 9px 0 0;
  padding-left: 2px;
  color: #8a8a8a;
  font-size: 14.5px;
  line-height: 19px;
`;

const G1 = "#cbe6db", G2 = "#e1f2e9", O1 = "#fbdcc0", O2 = "#feebd9", B1 = "#cad9e6", B2 = "#e2f0fb";

const rects = (fill: string, list: number[][]) => list.map((r, i) => <rect key={fill + i} x={r[0]} y={r[1]} width={r[2]} height={r[3]} fill={fill} />);
const rings = (stroke: string, r: number, list: number[][], w = 3) => list.map((p, i) => <circle key={stroke + i} cx={p[0]} cy={p[1]} r={r} fill="none" stroke={stroke} strokeWidth={w} />);
const discs = (list: [number, number, number, string][]) => list.map(([x, y, r, c], i) => <circle key={i} cx={x} cy={y} r={r} fill={c} />);
const line = (stroke: string, d: string, w = 3) => <path d={d} stroke={stroke} strokeWidth={w} fill="none" />;

const AMERICAS = "M26 46l8-5 20 3 8-3 6 5-2 7 8 4 2 6-9 4-6 5-3 7-5-2-2 4 3 5 6 2 8 2 10 7-3 11-9 7-5 12-4-3-1-14-6-13 1-7-8-4-6-9-3-7 4-7-3-6-7-3z M66 40l24 0-4 6-9 7-6-5z";
const AFROEURASIA = "M92 63l-3-4 6-4 1-7 8-7 7 1-1 4 9-2 14-4 16 1 14 3 14 2-2 5-7 2 0 6-4-4-6 2 3 6-5 6-4 8-4 2 2 8-4-3-4-8-4 0-5 9-5-10-8-3 4 6-7 4-6-9-5-2 3-5-8-1-4-4-4 4z M92 70l10-3 10 4 6 2 5 12 6 2-7 9-1 10-7 8-5 0-4-13-2-9-9-3-3-10z";
const OCEANIA = "M156 108l3-7 9-4 7 5 1 7-6 4-5-4z M150 89l7 5 9 1-2 2-8-1z M164 64l4-5 1 5-3 4z";

const tinyRows = (y: number[], a: string[], b: string[], x1: number, x2: number, c: string) =>
  y.map((yy, i) => (
    <g key={i} fontSize="13" fill={c}>
      <text x={x1} y={yy} textLength={a[i].length * 8}>{a[i]}</text>
      <text x={x2} y={yy} textLength={b[i].length * 8}>{b[i]}</text>
    </g>
  ));

const THUMBS: React.ReactNode[] = [
  <>
    {rects("#fff", [[30, 24, 148, 106]])}
    {rects("#dedede", [[30, 24, 148, 28], [30, 80, 148, 26]])}
    {rects("#aaa", [[38, 36, 15, 4], [38, 66, 18, 4], [38, 96, 13, 4]])}
    {tinyRows([45, 73, 100, 124], ["1234", "368", "2620", "971"], ["678", "3034", "2559", "322"], 72, 124, "#8c8c8c")}
    <rect x="30" y="24" width="148" height="106" fill="none" stroke="#b0b0b0" strokeWidth="3" />
  </>,
  <>
    {rects("#ececec", [[38, 35, 15, 6], [38, 65, 15, 6], [38, 95, 12, 6]])}
    {rects(G2, [[62, 26, 21, 21], [155, 26, 12, 12], [62, 65, 18, 20], [125, 67, 18, 17], [151, 65, 25, 20], [92, 101, 24, 24], [155, 101, 21, 21]])}
    {rects(G1, [[125, 26, 21, 21], [62, 101, 27, 27], [125, 101, 27, 27]])}
    {rects(O1, [[92, 26, 18, 18], [92, 65, 12, 12]])}
  </>,
  <>
    {rects(G1, [[64, 24, 56, 28], [120, 54, 58, 28], [64, 114, 56, 14]])}
    {rects(G2, [[120, 24, 58, 28], [64, 84, 56, 28], [120, 84, 58, 28], [120, 114, 58, 14]])}
    {rects(O2, [[64, 54, 56, 28]])}
    {rects("#e8e8e8", [[38, 36, 15, 5], [38, 66, 12, 5], [38, 96, 12, 5]])}
    {tinyRows([43, 75, 105], ["1234", "368", "2620"], ["546", "340", "53890"], 70, 128, "#bcd4c8")}
    <path d="M30 24h148v106H30zM62 24v106M62 53h116M62 83h116M62 113h116M120 24v106" fill="none" stroke="#dadada" strokeWidth="2.500" />
  </>,
  <>
    <path d={AMERICAS + AFROEURASIA + OCEANIA} fill="#dcdcdc" />
    {discs([[32, 74, 6, "#c4253c"], [55, 63, 4, "#f48b84"], [36, 63, 3, "#c4253c"], [53, 91, 3.500, "#c4253c"], [70, 97, 4.500, "#f48b84"], [94, 52, 4, "#e0564c"], [106, 64, 5, "#c4253c"], [91, 63, 4, "#f48b84"], [116, 81, 4, "#f48b84"], [141, 70, 7.500, "#c4253c"], [154, 70, 4, "#e0564c"], [153, 78, 3, "#c4253c"], [157, 88, 5, "#e0564c"], [170, 103, 5, "#f48b84"], [166, 107, 3, "#c4253c"]])}
  </>,
  <>
    <path d={AMERICAS + OCEANIA} fill="#e35a4f" />
    <path d={AFROEURASIA} fill="#ff9d95" />
  </>,
  <>
    <circle cx="105" cy="80" r="44" fill={B2} />
    <path d="M105 80V36A44 44 0 0 1 136 49z" fill="#fde0e0" />
    <path d="M105 80 136 49a44 44 0 0 1 0 62z" fill={B1} />
    <path d="M105 80H61a44 44 0 0 1 44-44z" fill="#f6cdcd" />
  </>,
  <>{rects(B1, [[38, 35, 72, 12], [38, 59, 132, 12], [38, 83, 36, 12], [38, 107, 105, 12]])}</>,
  <>
    {rects(B2, [[41, 56, 24, 66], [74, 77, 24, 45], [110, 101, 24, 21], [146, 92, 24, 30]])}
    {rects(B1, [[41, 35, 24, 21], [74, 53, 24, 24], [110, 44, 24, 57], [146, 65, 24, 27]])}
  </>,
  <>
    {rects("#ececec", [[77, 17, 3, 120], [131, 17, 3, 120]])}
    {rects(B1, [[35, 95, 12, 42], [92, 47, 12, 90], [146, 107, 12, 30]])}
    {rects(B2, [[50, 68, 12, 69], [107, 80, 12, 57], [161, 65, 12, 72]])}
  </>,
  <>
    {rects("#d6e4f0", [[38, 32, 63, 45], [104, 32, 33, 30], [128, 65, 21, 30]])}
    {rects(B1, [[38, 80, 63, 42], [152, 98, 18, 12]])}
    {rects(B2, [[140, 32, 30, 30], [152, 65, 18, 30], [128, 98, 21, 24], [152, 113, 18, 9]])}
    {rects("#fde0e0", [[104, 65, 21, 30]])}
    {rects("#f6cdcd", [[104, 98, 21, 24]])}
  </>,
  <>
    {rings(B2, 14, [[53, 48], [107, 90], [159, 72], [159, 118]])}
    {rings(B1, 14, [[53, 62], [53, 102], [107, 50], [107, 104]])}
    {rings("#d5e5f2", 14, [[159, 49], [53, 50]])}
    <path d="M93 140a14 14 0 0 1 28 0" fill="none" stroke={B2} strokeWidth="3" />
  </>,
  <>
    {rects("#ececec", [[104, 17, 3, 120]])}
    {rings(B1, 10.500, [[47, 43], [76, 56], [76, 120], [164, 57], [136, 102]])}
    {rings(B2, 10.500, [[47, 58], [76, 92], [47, 115], [136, 45], [164, 108], [136, 114]])}
    {rings("#d5e5f2", 10.500, [[164, 70]])}
  </>,
  <>
    {line("#fde9cc", "M36 69 60 74 92 50 144 90 174 84")}
    {line(O1, "M36 51 56 31 90 78 122 54 144 74 174 57")}
    {line(B1, "M32 88 56 114 106 87 144 111 174 103")}
  </>,
  <>
    {rects("#ececec", [[104, 17, 3, 120]])}
    {line(O1, "M32 65 52 71 72 50 95 52M116 66 138 43 156 58 178 52")}
    {line("#fde9cc", "M32 86 52 83 76 60 95 76M116 84 138 76 156 84 178 72")}
    {line(B1, "M32 108 54 113 72 95 95 96M116 112 132 96 148 106 178 94")}
  </>,
  <>
    {line(O1, "M48 60 74 34 100 54 122 46 148 65 167 51")}
    {line(B1, "M48 84 72 73 99 106 118 97 148 106 166 83")}
    <path d="M35 30v95M178 30v95" stroke="#e4e4e4" strokeWidth="9" strokeDasharray="2 13" />
  </>,
  <>
    <path d="M29 83 63 37 125 76 179 61V137H29z" fill={B1} />
    <path d="M29 85 63 62 125 102 179 80V137H29z" fill="#fde0c2" />
    <path d="M29 108 63 92 125 118 179 108V137H29z" fill={O2} />
  </>,
  <>
    <path d="M29 76 46 37 74 76 101 60V137H29zM107 76 125 37 152 76 179 60V137H107z" fill={B1} />
    <path d="M29 84 46 62 74 102 101 76V137H29zM107 84 125 62 152 102 179 76V137H107z" fill="#fde0c2" />
    <path d="M29 110 46 92 74 120 101 108V137H29zM107 110 125 92 152 120 179 108V137H107z" fill={O2} />
  </>,
  <>
    {rects(B1, [[50, 80, 15, 57], [74, 65, 15, 72], [98, 92, 15, 45], [122, 38, 15, 99], [146, 77, 15, 60]])}
    {line(O1, "M53 68 80 44 105 80 134 54 158 77")}
    <path d="M35 30v110M178 30v110" stroke="#e4e4e4" strokeWidth="9" strokeDasharray="2 13" />
  </>,
  <>
    {rings("#fcdcb8", 11, [[86, 50], [149, 56], [62, 80], [95, 92], [44, 116]])}
    <path d={[plus(126, 37, 13), plus(114, 70, 13), plus(159, 88, 13), plus(72, 108, 13), plus(126, 105, 13)].join("")} stroke={G1} strokeWidth="3" />
  </>,
  <>{rects(G1, [[38, 120, 12, 9], [53, 105, 12, 24], [68, 78, 12, 51], [83, 48, 12, 81], [98, 36, 12, 93], [113, 48, 12, 81], [128, 78, 12, 51], [143, 105, 12, 24], [158, 120, 12, 9]])}</>,
  <>
    {rects(G2, [[41, 68, 21, 14], [77, 54, 21, 27], [113, 63, 21, 24], [149, 48, 21, 36]])}
    {rects(G1, [[41, 81, 21, 24], [77, 81, 21, 15], [113, 87, 21, 24], [149, 84, 21, 15]])}
    {line("#b9b9b9", "M51 46v69M43 46h16M43 115h16M87 40v81M79 40h16M79 121h16M123 37v87M115 37h16M115 124h16M159 31v96M151 31h16M151 127h16")}
  </>,
  <>
    {rects(G1, [[32, 26, 27, 24], [53, 62, 9, 24], [74, 62, 12, 24], [32, 101, 6, 24], [119, 101, 21, 24]])}
    {rects(G2, [[32, 62, 18, 24], [95, 62, 42, 24], [89, 101, 12, 24]])}
    {rects(O1, [[80, 26, 12, 24], [128, 26, 6, 24], [152, 62, 24, 24], [77, 101, 6, 24]])}
    {rects(O2, [[95, 26, 12, 24], [146, 26, 24, 24], [47, 101, 24, 24], [158, 101, 12, 24]])}
  </>,
  <>
    {rects("#f5f5f5", [[35, 29, 132, 24], [35, 65, 132, 24], [35, 101, 132, 24]])}
    {rects(G1, [[35, 35, 75, 12], [35, 71, 120, 12], [35, 107, 63, 12]])}
    {rects("#b9b9b9", [[119, 29, 3, 24], [140, 65, 3, 24], [158, 101, 3, 24]])}
  </>,
  <>{discs([[66, 98, 28, G2], [69, 54, 11, G1], [98, 48, 15, G1], [127, 51, 9, G2], [156, 65, 20, O2], [112, 80, 17, O2], [140, 97, 11, O1], [110, 114, 13, G1]])}</>,
];

function ShowMePanel() {
  return (
    <ShowMe>
      <ShowMeTab>
        <svg width="15" height="16" viewBox="0 0 15 16"><path d="M0 0h11v3H0z" fill="#8a6c98" /><path d="M0 4h14v3H0z" fill="#7ba0cb" /><path d="M0 8h5v3H0z" fill="#f8a071" /><path d="M0 12h8v3H0z" fill="#f36d7c" /></svg>
        <Fit w={71}>Show Me</Fit>
      </ShowMeTab>
      <ShowMeBody>
        <ThumbGrid>
          {THUMBS.map((t, i) => (
            <Thumb key={i} $on={i === 3}>
              <svg width="69" height="52" viewBox="0 0 207 156">{t}</svg>
            </Thumb>
          ))}
        </ThumbGrid>
        <HintTitle>
          <Fit w={26}>For </Fit><b><Fit w={99}>symbol maps </Fit></b><Fit w={20}>try</Fit>
        </HintTitle>
        <Hint>
          <Fit w={35}>1 geo</Fit>
          <GlobeIcon width="11" height="11" viewBox="0 0 11 11" fill="none" stroke="#666" strokeWidth="1"><circle cx="5.500" cy="5.500" r="5" /><ellipse cx="5.500" cy="5.500" rx="2.300" ry="5" /><path d="M1 3.700h9M1 7.300h9" /></GlobeIcon>
          <Pill $w={105}><Fit w={75}>Dimension</Fit></Pill>
        </Hint>
        <Hint>
          <Fit w={67}>0 or more</Fit>
          <Pill $w={113}><Fit w={82}>Dimensions</Fit></Pill>
        </Hint>
        <Hint>
          <Fit w={39}>0 to 2</Fit>
          <Pill $w={98} $green><Fit w={69}>Measures</Fit></Pill>
        </Hint>
        <Note>
          <Fit w={185}>May use spatial measure in</Fit>
          <Fit w={157}>place of geo dimension</Fit>
        </Note>
      </ShowMeBody>
    </ShowMe>
  );
}

/* ---------- bottom bars ---------- */

const TabStrip = styled.div`
  height: 37px;
  background: #e6e6e6;
  border-top: 1px solid #c8c8c8;
  border-bottom: 1px solid #cfcfcf;
  display: flex;
`;

const SheetTab = styled.div<{ $w: number; $pl?: number; $on?: boolean }>`
  width: ${(p) => p.$w}px;
  padding-left: ${(p) => p.$pl ?? 7}px;
  border-right: 1px solid #c3c3c3;
  display: flex;
  align-items: center;
  gap: 5px;
  font-size: 14.5px;
  color: #666;
  background: ${(p) => (p.$on ? "#fafafa" : "transparent")};
  font-weight: ${(p) => (p.$on ? 600 : 400)};
`;

const StatusBar = styled.div`
  height: 27px;
  background: #ebebeb;
  border-bottom: 1px solid #bdbdbd;
  display: flex;
  align-items: center;
  padding-left: 3px;
  font-size: 12.8px;
  color: #222;
`;

const StatusCell = styled.div<{ $w: number; $px?: number }>`
  width: ${(p) => p.$w}px;
  height: 26px;
  border-left: 1px solid #cacaca;
  display: flex;
  align-items: center;
  justify-content: space-between;
  padding: 0 ${(p) => p.$px ?? 0}px;
`;

const StatusGap = styled.div<{ $w: number }>`
  width: ${(p) => p.$w}px;
`;

const Taskbar = styled.footer`
  height: 59px;
  background: #eee;
  display: flex;
  align-items: center;
  color: #1b1b1b;
  font-size: 14.5px;
`;

const Weather = styled.div`
  width: 585px;
  padding-left: 24px;
  display: flex;
  gap: 8px;
  align-items: center;
  line-height: 20px;
  font-size: 14px;
`;

const Muted = styled.div`
  color: #5d5d5d;
`;

const SearchBox = styled.div`
  width: 273px;
  height: 39px;
  margin: 0 6.5px 0 18px;
  border-radius: 20px;
  background: #fbfbfb;
  border: 1px solid #dcdcdc;
  border-bottom-color: #c6c6c6;
  display: flex;
  align-items: center;
  gap: 12px;
  padding-left: 13px;
  font-size: 16px;
  color: #555;
`;

const TaskApp = styled.div<{ $active?: boolean; $open?: boolean }>`
  position: relative;
  width: 48px;
  height: 48px;
  margin-right: 7.07px;
  border-radius: 4px;
  display: grid;
  place-items: center;
  ${(p) => p.$active && "background:#f8f8f8; box-shadow: 0 0 0 1px #e4e4e4;"}
  ${(p) =>
    (p.$active || p.$open) &&
    css`
      &::after {
        content: "";
        position: absolute;
        bottom: 0;
        width: ${p.$active ? 19 : 8}px;
        height: 4px;
        border-radius: 2px;
        background: ${p.$active ? "#26808f" : "#8a8a8a"};
      }
    `}
`;

const Badge = styled.span`
  position: absolute;
  left: 25px;
  top: 3px;
  width: 20px;
  height: 20px;
  border-radius: 50%;
  background: #26808f;
  color: #fff;
  font-size: 13px;
  line-height: 19px;
  text-align: center;
`;

const Tray = styled.div`
  margin-left: auto;
  display: flex;
  align-items: center;
  padding-right: 26px;
  line-height: 20px;
`;

const Stack = styled.div<{ $ml: number; $align: string }>`
  margin-left: ${(p) => p.$ml}px;
  text-align: ${(p) => p.$align};
  display: flex;
  flex-direction: column;
  align-items: ${(p) => (p.$align === "center" ? "center" : "flex-end")};
`;

const Gap = styled.i<{ $w: number }>`
  width: ${(p) => p.$w}px;
`;

function BottomTabs() {
  const add = (
    <path d="M10 12.500h8M14 8.500v8" stroke="#444" strokeWidth="2" />
  );
  const mini = (d: string) => (
    <svg width="17" height="17" viewBox="0 0 18 18" fill="none" stroke="#666" strokeWidth="1.200"><path d={d} />{add}</svg>
  );
  return (
    <TabStrip>
      <SheetTab $w={163} $pl={10}>
        <svg width="10" height="12" viewBox="0 0 10 12" fill="none" stroke="#666"><ellipse cx="5" cy="2.500" rx="4" ry="2" /><path d="M1 2.500v7c0 1 2 1.800 4 1.800s4-.8 4-1.800v-7" /></svg>
        <Fit w={85}>Data Source</Fit>
      </SheetTab>
      <SheetTab $w={69}><Fit w={51}>Sheet 1</Fit></SheetTab>
      <SheetTab $w={70} $pl={6}><Fit w={53}>Sheet 2</Fit></SheetTab>
      <SheetTab $w={70} $pl={6}><Fit w={53}>Sheet 3</Fit></SheetTab>
      <SheetTab $w={71} $pl={6}><Fit w={53}>Sheet 4</Fit></SheetTab>
      <SheetTab $w={122} $pl={8} $on>
        <svg width="11" height="12" viewBox="0 0 11 12" fill="none" stroke="#666"><path d="M.5.5h10v11H.5zM5.500.5v11M.5 6h10" /></svg>
        <Fit w={89}>Dashboard 1</Fit>
      </SheetTab>
      <SheetTab $w={32} $pl={8}>{mini("M9 13H1.500V2h11v6M4.500 10.500V8M7 10.500V5M9.500 8V6")}</SheetTab>
      <SheetTab $w={32} $pl={8}>{mini("M9 13H1.500V2h11v6M7 2v11M1.500 7.500h11")}</SheetTab>
      <SheetTab $w={32} $pl={8}>{mini("M9 12.500 7 14 1.500 12.500V2L7 4l6-2v6M7 4v10")}</SheetTab>
    </TabStrip>
  );
}

function Status() {
  const nav = (d: string) => <svg width="9" height="9" viewBox="0 0 9 9" fill="#b9b9b9"><path d={d} /></svg>;
  return (
    <StatusBar>
      <Fit w={55}>78 marks</Fit>
      <StatusGap $w={21} />
      <Fit w={104}>1 row by 1 column</Fit>
      <StatusGap $w={1318} />
      <StatusCell $w={157} />
      <StatusCell $w={32} />
      <StatusCell $w={32} />
      <StatusCell $w={57} />
      <StatusCell $w={71} $px={6.5}>
        {nav("M1 1h1.500v7H1zM8 1v7L3 4.500z")}
        {nav("M7 1v7L2 4.500z")}
        {nav("M2 1v7l5-3.500z")}
        {nav("M1 1v7l5-3.500zM6.500 1H8v7H6.500z")}
      </StatusCell>
      <StatusCell $w={71} $px={7}>
        <svg width="11" height="11" viewBox="0 0 11 11"><path d="M1.500 0v11M5.500 0v11M9.500 0v11" stroke="#b9b9b9" strokeWidth="3" strokeDasharray="3 1" /></svg>
        <svg width="11" height="11" viewBox="0 0 11 11" fill="#b9b9b9"><path d="M0 0h11v7H0zM0 8h3v3H0zM4 8h3v3H4zM8 8h3v3H8z" /></svg>
        <svg width="11" height="11"><path d="M0 0h11v11H0z" fill="#666" /></svg>
      </StatusCell>
    </StatusBar>
  );
}

function TaskbarView() {
  return (
    <Taskbar>
      <Weather>
        <svg width="32" height="30" viewBox="0 0 32 30">
          <defs>
            <linearGradient id="sun" x1="0" y1="0" x2="1" y2="1"><stop offset="0" stopColor="#f8b62b" /><stop offset="1" stopColor="#f26a1b" /></linearGradient>
            <linearGradient id="cl" x1="0" y1="0" x2="0" y2="1"><stop offset="0" stopColor="#d5e2fb" /><stop offset="1" stopColor="#7d9fdd" /></linearGradient>
          </defs>
          <circle cx="16" cy="14.500" r="12.500" fill="url(#sun)" />
          <path d="M5 12a4 4 0 0 1 0-7.500 5.500 5.500 0 0 1 9.500 1.500 3 3 0 0 1 1.500 6z" fill="url(#cl)" />
          <path d="M18 27a4 4 0 0 1 0-7.500 5.500 5.500 0 0 1 9.500 1.500 3 3 0 0 1 1.500 6z" fill="url(#cl)" />
        </svg>
        <div>
          <div><Fit w={32}>27°C</Fit></div>
          <Muted><Fit w={82}>Partly sunny</Fit></Muted>
        </div>
      </Weather>
      <svg width="29" height="29" viewBox="0 0 29 29">
        <defs><linearGradient id="win" x1="0" y1="0" x2="1" y2="1"><stop offset="0" stopColor="#4cc9fb" /><stop offset="1" stopColor="#0070d2" /></linearGradient></defs>
        <path d="M1 0h13v14H0V1zM15 0h13l1 1v13H15zM0 15h14v14H1l-1-1zM15 15h14v13l-1 1H15z" fill="url(#win)" />
      </svg>
      <SearchBox>
        <svg width="19" height="20" viewBox="0 0 19 20" fill="none" stroke="#222" strokeWidth="2"><circle cx="8.500" cy="8" r="6.500" /><path d="M13 12.500l5 6" /></svg>
        <Fit w={52}>Search</Fit>
      </SearchBox>
      <TaskApp>
        <svg width="30" height="29" viewBox="0 0 30 29"><rect x="1" y="8" width="22" height="20" rx="1" fill="#2c2c2c" /><rect x="8" y="1" width="22" height="20" rx="1" fill="#fff" opacity=".93" /><path d="M8 8h15v13H8z" fill="#b5b5b5" /></svg>
      </TaskApp>
      <TaskApp>
        <svg width="29" height="29" viewBox="0 0 29 29"><defs><linearGradient id="chat" x1="0" y1="0" x2="1" y2="1"><stop offset="0" stopColor="#8a5fb0" /><stop offset=".5" stopColor="#5d61c8" /><stop offset="1" stopColor="#6b62d8" /></linearGradient></defs><path d="M15 1a14 14 0 1 1-5 26.500L1 28l1-7A14 14 0 0 1 15 1z" fill="url(#chat)" /><path d="M8 9h11a1 1 0 0 1 1 1v9a1 1 0 0 1-1 1H8a1 1 0 0 1-1-1v-9a1 1 0 0 1 1-1zM20.500 13l3-2.500v8l-3-2.500z" fill="#fff" /></svg>
      </TaskApp>
      <TaskApp>
        <svg width="30" height="28" viewBox="0 0 30 28"><defs><linearGradient id="fold" x1="0" y1="0" x2="1" y2="1"><stop offset="0" stopColor="#ffd75e" /><stop offset="1" stopColor="#fdbb17" /></linearGradient></defs><path d="M0 1h10l3 3v4H0z" fill="#d99a0b" /><path d="M0 6l12-1 2-1h16v23H0z" fill="url(#fold)" /><path d="M5 27v-5a3 3 0 0 1 3-3h14a3 3 0 0 1 3 3v5z" fill="#1180d8" /><path d="M9 23h12" stroke="#0a5ba8" strokeWidth="1.500" /></svg>
      </TaskApp>
      <TaskApp $open>
        <svg width="31" height="30" viewBox="0 0 31 30"><path d="M15.500 1.500a13 13 0 1 1-6.500 24.700L1 28.500l2.500-7.500a13 13 0 0 1 12-19.500z" fill="#37c351" stroke="#fff" strokeWidth="2" /><path d="M10.500 7.500c1-.5 2 0 2.300 1l.9 2.300c.2.700-1.300 1.900-1.100 2.400 1 2 2.700 3.700 5.200 4.800.600.200 1.600-1.800 2.300-1.600l2.700 1.300c.5.3.2 2.300-.7 3-4 3-13.500-4-13.600-10 0-1.500 1-2.600 2-3.200z" fill="#fff" /></svg>
        <Badge>1</Badge>
      </TaskApp>
      <TaskApp $open>
        <svg width="31" height="31" viewBox="0 0 31 31"><defs><linearGradient id="e1" x1="0" y1="0" x2="1" y2="0"><stop offset="0" stopColor="#2aa6e0" /><stop offset="1" stopColor="#5fd45a" /></linearGradient></defs><circle cx="15.500" cy="15.500" r="14.500" fill="#1466b8" /><path d="M1.500 13A14.500 14.500 0 0 1 30 15.500c0 6-7 8-11 5 3-4 0-9-6-9-5 0-9 2-11.500 6z" fill="url(#e1)" /><path d="M13 13c-4 4-2 12 4 14 5 1 10-2 11.500-5-4 2-10 1-12-2-1-2-1-4-3.500-7z" fill="#0c4f94" /><path d="M17 19.500c2 3 8 3.500 12 1.200l1.500 1.800-3 1.500c-5 1-9-.5-10.500-4.500z" fill="#eee" /><circle cx="8" cy="22.500" r="7" fill="#e2e2e2" stroke="#fff" /><circle cx="8" cy="20" r="2.200" fill="#888" /><path d="M4 26.500c0-5 8-5 8 0z" fill="#888" /></svg>
      </TaskApp>
      <TaskApp>
        <svg width="29" height="30" viewBox="0 0 29 30"><path d="M8.500 7V2.500a1 1 0 0 1 1-1h10a1 1 0 0 1 1 1V7" fill="none" stroke="#3bb6f0" strokeWidth="2" /><path d="M1 6h27v20a3 3 0 0 1-3 3H4a3 3 0 0 1-3-3z" fill="#173f78" /><path d="M1 6h27v8L1 18z" fill="#115ca8" opacity=".7" /><path d="M9 12h5v5H9z" fill="#f25022" /><path d="M15 12h5v5h-5z" fill="#7fba00" /><path d="M9 18h5v5H9z" fill="#00a4ef" /><path d="M15 18h5v5h-5z" fill="#ffb900" /></svg>
      </TaskApp>
      <TaskApp $open>
        <svg width="27" height="31" viewBox="0 0 27 31"><path d="M7 1h13l2.500 3 2.500 1 1 4-1 3-2.500 12L13.500 30.500 4.500 24 2 12 1 9l1-4 2.500-1z" fill="#fb4a1d" /><path d="M13.500 6l4-1 4.500 5-2 4 .5 3-4.500 3-2.500 4.500-2.500-4.500-4.500-3 .5-3-2-4 4.500-5z" fill="#fff" /><path d="M9 11l3 1.500M18 11l-3 1.500M13.500 12v5l-2 1.500 2 1.500 2-1.500-2-1.500" stroke="#fb4a1d" strokeWidth="1.300" fill="none" /></svg>
      </TaskApp>
      <TaskApp $active>
        <svg width="28" height="28" viewBox="0 0 28 28"><path d="M0 0h28v28H0z" fill="#dcdcdc" /><path d="M0 0h27v27H0z" fill="#fff" /><g transform="translate(2.500 2.500) scale(.92)" stroke="#3a84b0" strokeWidth="1.500" fill="none"><path d={[plus(12, 12, 4), plus(6, 6, 2.800), plus(18, 6, 2.800), plus(6, 18, 2.800), plus(18, 18, 2.800), plus(12, 2.500, 2), plus(12, 21.500, 2), plus(2, 12, 1.800), plus(22, 12, 1.800)].join("")} /></g></svg>
      </TaskApp>
      <Tray>
        <svg width="14" height="8" viewBox="0 0 14 8" fill="none" stroke="#222" strokeWidth="1.800"><path d="M1 7l6-6 6 6" /></svg>
        <Stack $ml={26} $align="center"><Fit w={29}>ENG</Fit><Fit w={15}>IN</Fit></Stack>
        <Gap $w={22} />
        <svg width="21" height="21" viewBox="0 0 21 21" fill="none" stroke="#222" strokeWidth="1.300"><path d="M19.500 9A9.300 9.300 0 1 0 9.500 19.500M1.500 7h17M1.500 13.500h8M10 1c-5 5-5 13 0 18.500M10 1c2.500 2 4 5 4.200 8" /><circle cx="15" cy="15" r="5.200" /><path d="M11.500 18.500l7-7" /></svg>
        <Gap $w={9} />
        <svg width="20" height="14" viewBox="0 0 20 14" fill="none" stroke="#222" strokeWidth="1.300"><path d="M1 4.500h3L9 1v12L4 9.500H1zM13 4.500l5.500 5.500M18.500 4.500 13 10" /></svg>
        <Gap $w={10} />
        <svg width="22" height="18" viewBox="0 0 22 18" fill="none" stroke="#222" strokeWidth="1.500"><path d="M10 4h7.500v11H5c-1.500 0-2.500-.5-3-1.500" /><path d="M18.500 7.500h2v4h-2z" fill="#222" /><path d="M2 13C-.5 8 2.500 4 7 1c2 4 3 9-1.500 11.500z" fill="#222" /><path d="M8 13l7-8v8z" fill="#222" stroke="none" /></svg>
        <Stack $ml={20} $align="right"><Fit w={64}>10:31 AM</Fit><Fit w={78}>01-11-2023</Fit></Stack>
        <Gap $w={10} />
        <svg width="18" height="20" viewBox="0 0 18 20" fill="#15495a"><path d="M9 .8a6 6 0 0 1 6.200 6v5.500l1.800 4H1l1.800-4V6.800A6 6 0 0 1 9 .8zM6 17.300h6a3 2.200 0 0 1-6 0z" /></svg>
      </Tray>
    </Taskbar>
  );
}

/* ---------- app ---------- */

const MENU: [string, number, number][] = [["File", 39.5, 23], ["Data", 47.5, 31], ["Worksheet", 85, 69], ["Dashboard", 89, 73], ["Story", 50, 34], ["Analysis", 69, 53], ["Map", 46, 30], ["Format", 63, 47], ["Server", 57, 41], ["Window", 72, 56], ["Help", 60, 31]];

export default function App() {
  return (
    <Window>
      <Global />
      <TitleBar>
        <AppBadge><TableauMark size={16} colors={BLUES} sw={1.600} /></AppBadge>
        <Fit w={150}>Tableau Public - Book1</Fit>
        <Controls>
          <svg width="13" height="13"><path d="M0 6.500h13" stroke="#222" /></svg>
          <svg width="13" height="13" viewBox="0 0 13 13" fill="none" stroke="#222" strokeWidth="1.200"><path d="M1 3.500h8.500V12H1zM3.500 3.500V1H12v8.500H9.500" /></svg>
          <svg width="13" height="13" viewBox="0 0 13 13" stroke="#222" strokeWidth="1.200"><path d="M1 1l11 11M12 1 1 12" /></svg>
        </Controls>
      </TitleBar>
      <MenuBar>
        {MENU.map(([t, w, f]) => <MenuItem key={t} $w={w}><Fit w={f}>{t}</Fit></MenuItem>)}
      </MenuBar>
      <Toolbar>
        <Tool $ml={0}><TableauMark size={19} colors={MULTI} sw={1.800} /></Tool>
        <Sep $ml={17} />
        <Tool $ml={14}>{Icons.back}</Tool>
        <Tool $ml={15}>{Icons.fwd}</Tool>
        <Tool $ml={13}>{Icons.redo}</Tool>
        <Tool $ml={8} $w={8}><Caret /></Tool>
        <Tool $ml={10}>{Icons.save}</Tool>
        <Tool $ml={15}>{Icons.db}</Tool>
        <Sep $ml={16} />
        <Tool $ml={12}>{Icons.sheet}</Tool>
        <Tool $ml={8} $w={8}><Caret /></Tool>
        <Tool $ml={10}>{Icons.dup}</Tool>
        <Tool $ml={13}>{Icons.clear}</Tool>
        <Tool $ml={8} $w={8}><Caret /></Tool>
        <Sep $ml={11} />
        <Tool $ml={13}>{Icons.swap}</Tool>
        <Tool $ml={16}>{Icons.asc}</Tool>
        <Tool $ml={15}>{Icons.desc}</Tool>
        <Sep $ml={16} />
        <Tool $ml={14}>{Icons.pen}</Tool>
        <Tool $ml={5} $w={8}><Caret /></Tool>
        <Tool $ml={9} $dim>{Icons.clip}</Tool>
        <Tool $ml={8} $w={8} $dim><Caret /></Tool>
        <Tool $ml={6} $w={37} $on>{Icons.text}</Tool>
        <Tool $ml={2} $w={37} $on>{Icons.pin}</Tool>
        <Combo><Caret s={7} c="#c8c8c8" /></Combo>
        <Sep $ml={17} />
        <Tool $ml={14}>{Icons.cards}</Tool>
        <Tool $ml={5} $w={8}><Caret /></Tool>
        <Tool $ml={12}>{Icons.present}</Tool>
        <Sep $ml={16} />
      </Toolbar>
      <Main>
        <SidePanel />
        <Canvas>
          <Sheets>
            <TopRow>
              <Sheet2 />
              <Sheet4 />
            </TopRow>
            <Sheet3 />
          </Sheets>
          <Legend>
            <LegendTitle><Fit w={24}>City</Fit></LegendTitle>
            {LEGEND.map(([t, w], i) => (
              <LegendRow key={t}>
                <Swatch $c={TABLEAU20[i % 20]} />
                <Fit w={w}>{t}</Fit>
              </LegendRow>
            ))}
          </Legend>
          <LegendScroll />
        </Canvas>
        <Gutter />
        <PageScroll><PageThumb /></PageScroll>
      </Main>
      <BottomTabs />
      <Status />
      <TaskbarView />
      <ShowMePanel />
    </Window>
  );
}
